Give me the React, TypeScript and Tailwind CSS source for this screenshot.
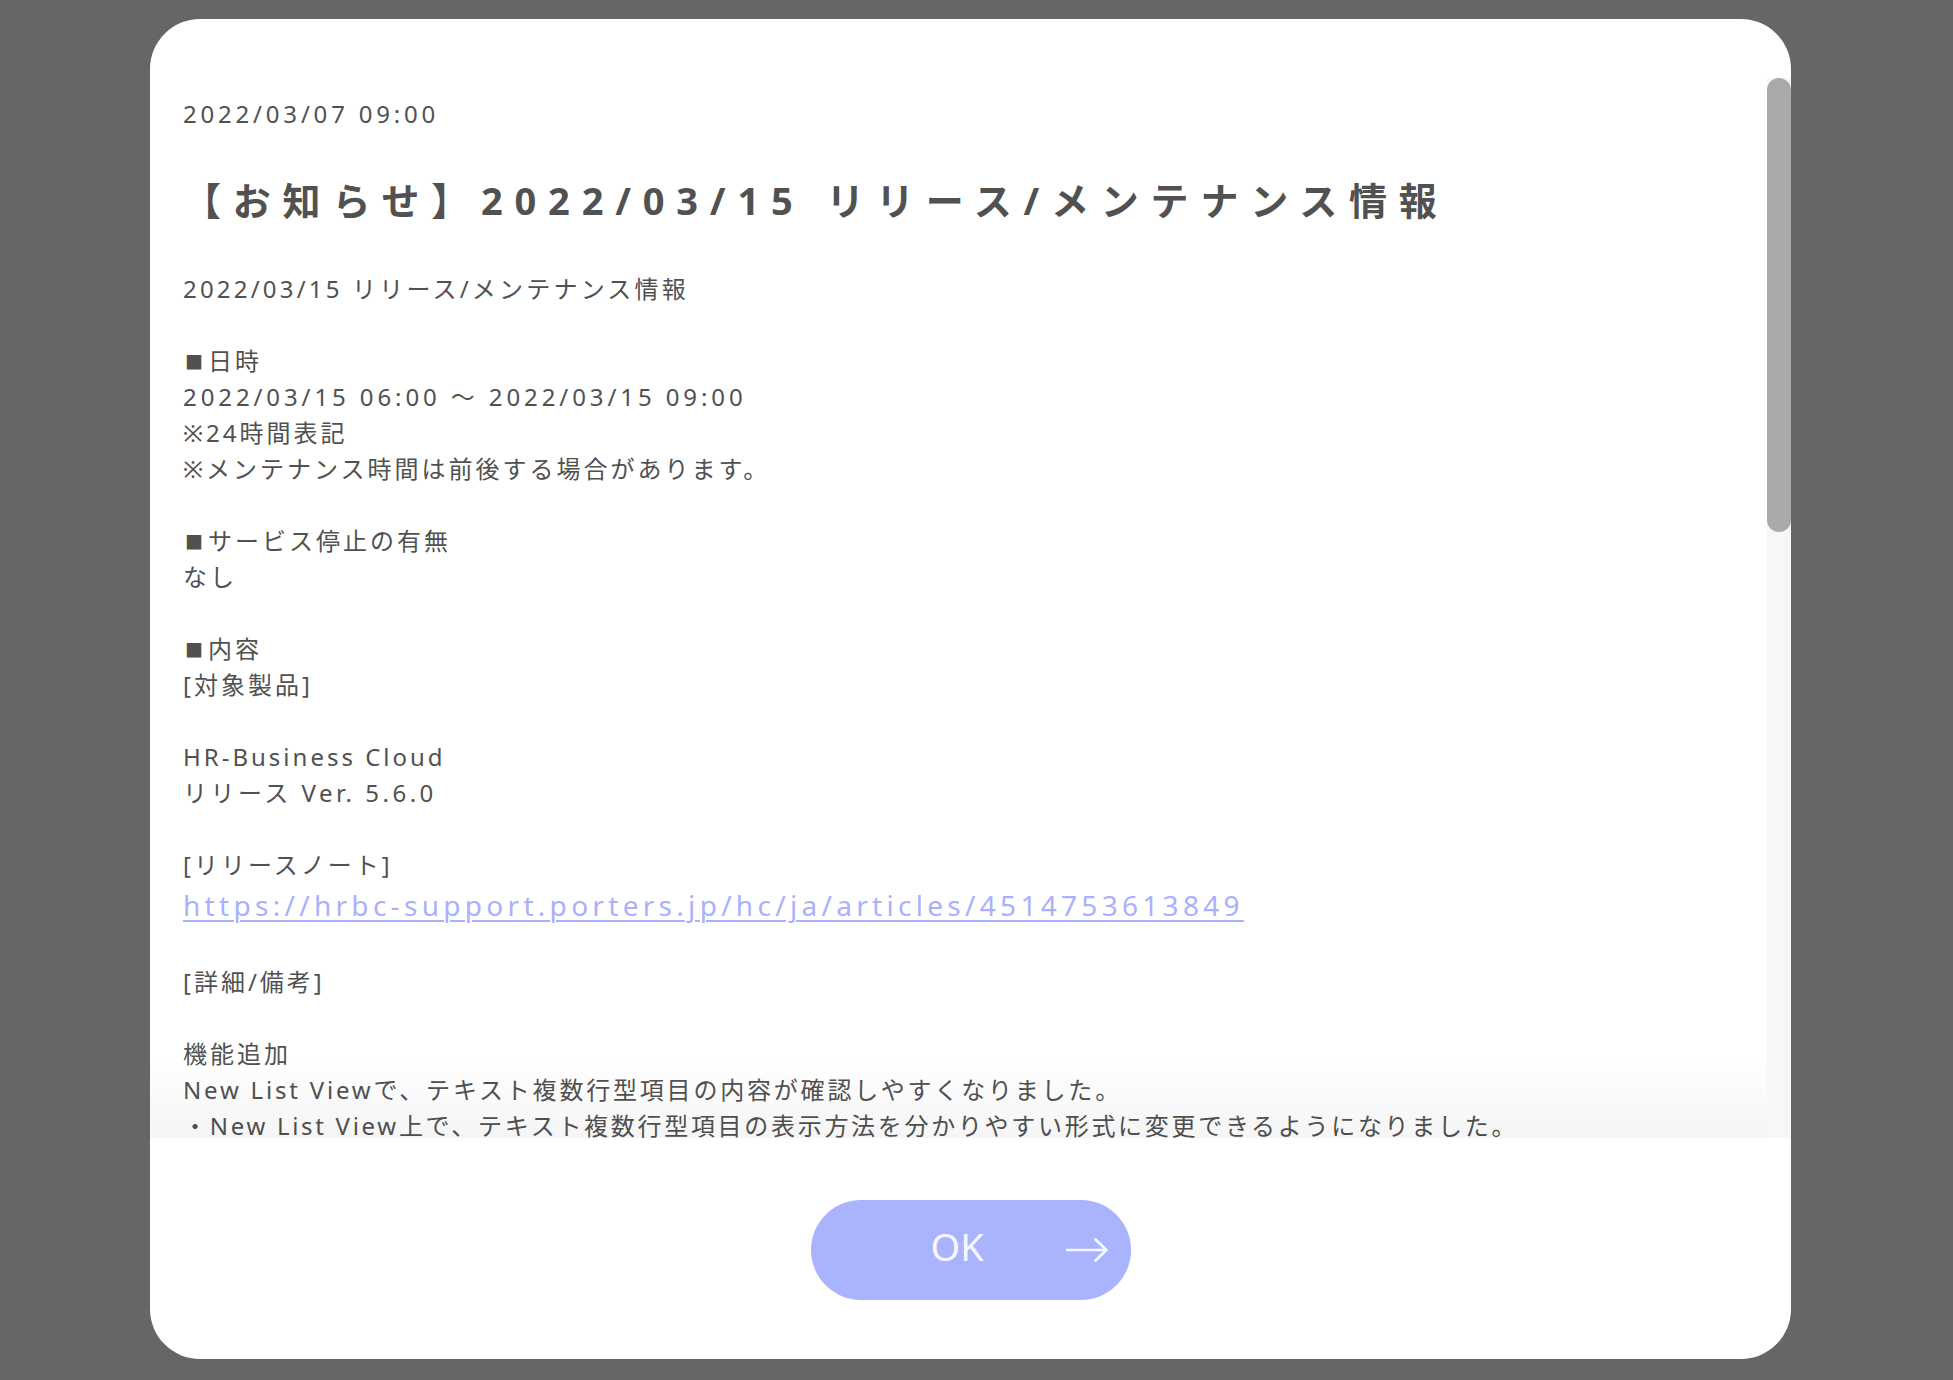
import React from "react";

type Line = { t: string; c?: string; sq?: boolean } | { blank: true } | { link: string };

const lines: Line[] = [
  { t: "2022/03/15 リリース/メンテナンス情報", c: "tracking-[3.2px]" },
  { blank: true },
  { t: "日時", sq: true },
  { t: "2022/03/15 06:00 〜 2022/03/15 09:00", c: "tracking-[3.9px]" },
  { t: "※24時間表記" },
  { t: "※メンテナンス時間は前後する場合があります。" },
  { blank: true },
  { t: "サービス停止の有無", sq: true },
  { t: "なし" },
  { blank: true },
  { t: "内容", sq: true },
  { t: "[対象製品]" },
  { blank: true },
  { t: "HR-Business Cloud" },
  { t: "リリース Ver. 5.6.0", c: "tracking-[3.5px]" },
  { blank: true },
  { t: "[リリースノート]" },
  { link: "https://hrbc-support.porters.jp/hc/ja/articles/4514753613849" },
  { blank: true },
  { t: "[詳細/備考]" },
  { blank: true },
  { t: "機能追加" },
  { t: "New List Viewで、テキスト複数行型項目の内容が確認しやすくなりました。", c: "tracking-[2.8px]" },
  { t: "・New List View上で、テキスト複数行型項目の表示方法を分かりやすい形式に変更できるようになりました。", c: "tracking-[2.7px]" },
  { t: "・表示方法は一覧画面の設定から変更できます。" },
  { blank: true },
  { t: "不具合修正" },
  { t: "・一部の条件で検索結果が正しく表示されない事象を修正しました。" },
  { blank: true },
  { t: "お問い合わせ", sq: true },
  { t: "ご不明な点がございましたら、サポート窓口までお問い合わせください。" },
];

function Arrow() {
  return (
    <svg width="42" height="24" viewBox="0 0 42 24" fill="none" className="ml-[82px] shrink-0">
      <path d="M0 12H40.5M29.5 1.5L40.5 12L29.5 22.5" stroke="#f7f8ff" strokeWidth="2.6" strokeLinecap="round" strokeLinejoin="round" />
    </svg>
  );
}

export default function App() {
  return (
    <div className="min-h-[1380px] w-full bg-[#666666] pt-[19px] font-['Noto_Sans','Noto_Sans_CJK_JP',sans-serif]">
      <div className="ml-[150px] flex h-[1340px] w-[1641px] flex-col rounded-[50px] bg-white pt-[59px]">
        <div className="flex h-[1060px] shrink-0">
          <div className="relative min-w-0 flex-1 overflow-hidden">
            <div className="pl-[33px] pr-[30px] pt-[18px] text-[#515151]">
              <div className="text-[24px] leading-[36px] tracking-[3.8px] whitespace-pre">2022/03/07 09:00</div>
              <h1 className="mt-[43px] text-[38px] font-bold leading-[50px] tracking-[11.8px] whitespace-pre">
                【お知らせ】2022/03/15 リリース/メンテナンス情報
              </h1>
              <div className="mt-[46px] text-[24px] leading-[36px] tracking-[3px]">
                {lines.map((l, i) => {
                  if ("blank" in l) return <div key={i} className="h-[36px]" />;
                  if ("link" in l)
                    return (
                      <div key={i} className="h-[45px] text-[28px] leading-[45px] tracking-[4.3px] whitespace-pre">
                        <a href="#" className="text-[#a9b1fc] underline decoration-[1.5px] underline-offset-[4px]">
                          {l.link}
                        </a>
                      </div>
                    );
                  return (
                    <div key={i} className={`h-[36px] whitespace-pre ${l.c ?? ""}`}>
                      {l.sq && <span className="ml-[2px] mr-[5px] align-[1px] text-[18px] leading-none tracking-normal">■</span>}
                      {l.t}
                    </div>
                  );
                })}
              </div>
            </div>
            <div className="pointer-events-none absolute bottom-0 left-0 right-0 h-[80px] bg-linear-to-b from-[#00000000] to-[#0000000a]" />
          </div>
          <div className="w-[24px] shrink-0 bg-[#f7f7f7]">
            <div className="h-[454px] w-full rounded-full bg-[#aaaaaa]" />
          </div>
        </div>
        <div className="flex justify-center pt-[62px]">
          <button className="flex h-[100px] w-[320px] items-center rounded-full bg-[#aab3fd] pl-[120px]">
            <span className="mb-[8px] text-[38px] leading-none text-[#f7f8ff]">OK</span>
            <Arrow />
          </button>
        </div>
      </div>
    </div>
  );
}
